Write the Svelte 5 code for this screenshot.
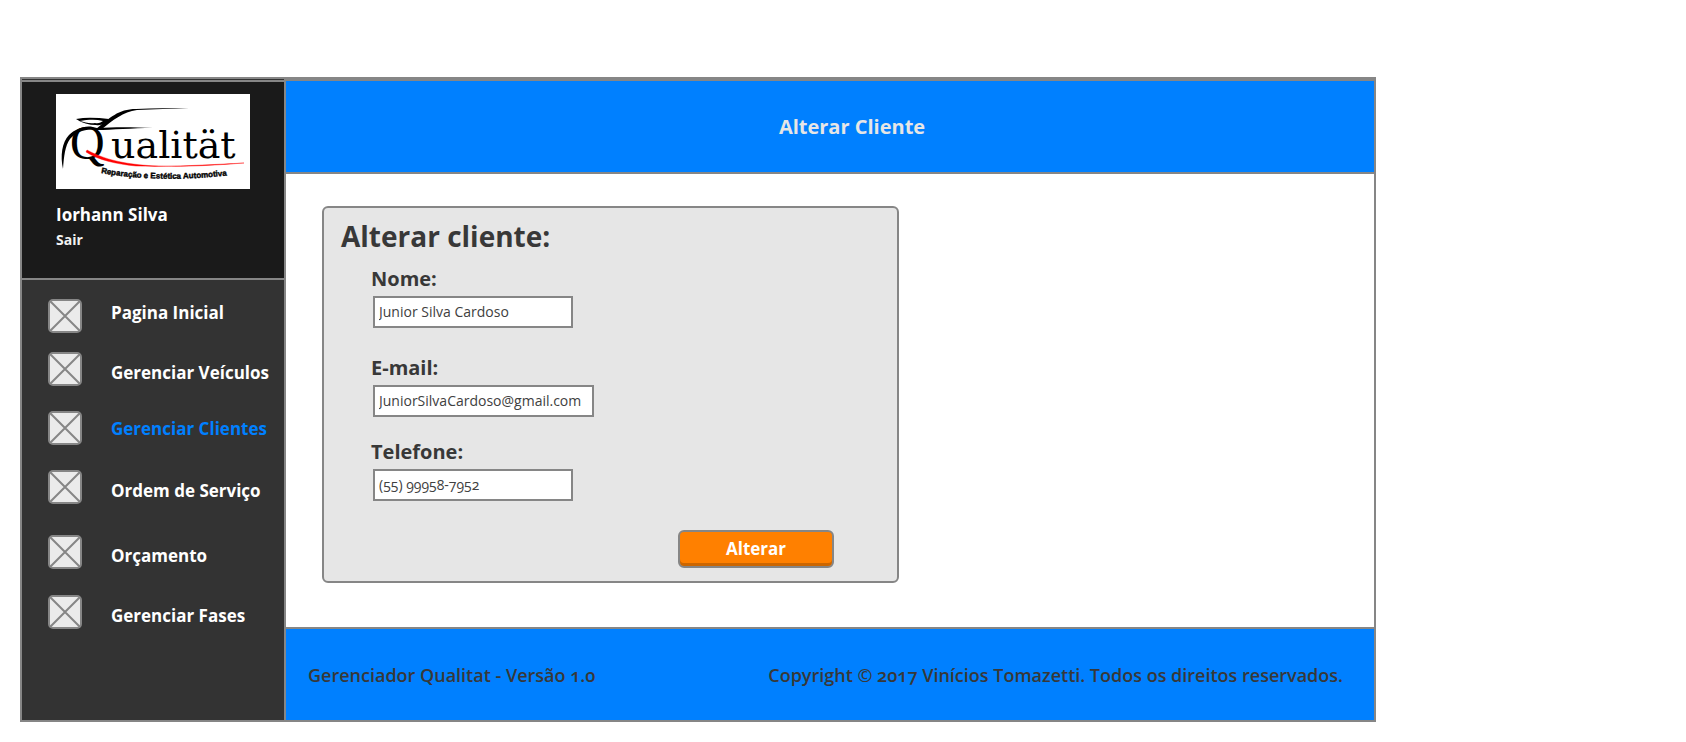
<script>
  const nav = [
    { label: 'Pagina Inicial', align: 'high' },
    { label: 'Gerenciar Veículos', align: 'low' },
    { label: 'Gerenciar Clientes', align: 'mid', active: true },
    { label: 'Ordem de Serviço', align: 'low' },
    { label: 'Orçamento', align: 'low' },
    { label: 'Gerenciar Fases', align: 'low' }
  ];

  let nome = $state('Junior Silva Cardoso');
  let email = $state('JuniorSilvaCardoso@gmail.com');
  let telefone = $state('(55) 99958-7952');
</script>

<div class="frame">
  <aside class="sidebar">
    <section class="profile">
      <svg class="logo" viewBox="0 0 194 95" role="img" aria-label="Qualität">
        <rect width="194" height="95" fill="#fff" />
        <path d="M7 75 C4 62 6 48 13 41 C20 34 31 30 41 34 C58 33 76 33 97 34 C76 34 56 36 41 36 C30 34 20 38 14 45 C9 52 8 62 7 75 Z" fill="#000" />
        <path d="M40 35 C54 24 62 15 80 15 C98 14 115 14 133 14 C115 15 98 15 81 16 C67 18 57 26 46 35 Z" fill="#000" />
        <path d="M20 25 C31 23 42 24 53 25 C49 29 46 32 40 31 C33 31 26 29 20 25 Z M24 27 C29 28 33 30 39 29 C43 30 45 28 47 27 C39 25 31 26 24 27 Z" fill="#000" fill-rule="evenodd" />
        <text class="q" x="14" y="65">Q</text>
        <text class="rest" x="55" y="64">ualität</text>
        <path d="M31 56 C60 72 100 76 188 69 C130 72 104 73 80 72 C60 70 42 66 30 58 Z" fill="#f00" stroke="#f00" stroke-width="0.4" />
        <path id="tagline" d="M45 79 Q105 90 184 80" fill="none" />
        <text class="tag"><textPath href="#tagline">Reparação e Estética Automotiva</textPath></text>
      </svg>
      <strong class="user">Iorhann Silva</strong>
      <a class="logout" href="#sair">Sair</a>
    </section>
    <nav>
      <ul>
        {#each nav as item}
          <li>
            <a class="item {item.align}" class:active={item.active} href="#menu">
              <svg class="box" viewBox="0 0 34 34" aria-hidden="true">
                <rect x="1" y="1" width="32" height="32" rx="4" />
                <path d="M2 2 32 32M32 2 2 32" />
              </svg>
              <span>{item.label}</span>
            </a>
          </li>
        {/each}
      </ul>
    </nav>
  </aside>

  <div class="page">
    <header><h1>Alterar Cliente</h1></header>
    <main>
      <form class="card" onsubmit={(e) => e.preventDefault()}>
        <h2>Alterar cliente:</h2>
        <div class="fields">
          <div class="field">
            <label for="nome">Nome:</label>
            <input id="nome" type="text" bind:value={nome} />
          </div>
          <div class="field">
            <label for="email">E-mail:</label>
            <input id="email" class="wide" type="email" bind:value={email} />
          </div>
          <div class="field">
            <label for="telefone">Telefone:</label>
            <input id="telefone" type="tel" bind:value={telefone} />
          </div>
        </div>
        <button type="submit">Alterar</button>
      </form>
    </main>
    <footer>
      <span>Gerenciador Qualitat - Versão 1.0</span>
      <span>Copyright © 2017 Vinícios Tomazetti. Todos os direitos reservados.</span>
    </footer>
  </div>
</div>

<style>
  :global(body) {
    background: #fff;
  }

  .frame, .frame * {
    box-sizing: border-box;
  }

  .frame {
    --line: #868686;
    --font: "Open Sans", "Noto Sans", sans-serif;
    display: flex;
    margin: 77px 310px 20px 20px;
    border: 2px solid var(--line);
    font-family: var(--font);
    font-variant-numeric: oldstyle-nums;
    font-weight: 700;
    color: #383838;
  }

  .sidebar {
    flex: 0 0 264px;
    padding-top: 1px;
    border-right: 2px solid var(--line);
    background: #333;
    color: #fff;
  }

  .profile {
    display: flex;
    flex-direction: column;
    align-items: flex-start;
    padding: 12px 34px 26px;
    border-top: 2px solid var(--line);
    border-bottom: 2px solid var(--line);
    background: #1a1a1a;
  }

  .logo {
    display: block;
    width: 194px;
    height: 95px;
    margin-bottom: 13px;
  }

  .q {
    font-family: "Liberation Serif", serif;
    font-size: 48px;
    font-weight: 400;
  }

  .rest {
    font-family: "DejaVu Serif", serif;
    font-size: 38px;
    font-weight: 400;
  }

  .tag {
    font-family: "Liberation Sans", sans-serif;
    font-size: 8px;
    font-weight: 700;
    stroke: #000;
    stroke-width: 0.4px;
  }

  .user {
    font-size: 17px;
    font-weight: 700;
    line-height: 25px;
  }

  .logout {
    color: #f2f2f2;
    font-size: 14px;
    line-height: 25px;
    text-decoration: none;
  }

  ul {
    display: grid;
    grid-template-rows: 53px 59px 59px 65px 60px 34px;
    margin: 0;
    padding: 19px 0 0 26px;
    list-style: none;
  }

  .item {
    display: flex;
    gap: 29px;
    height: 34px;
    color: #fff;
    font-size: 17px;
    line-height: 27px;
    text-decoration: none;
    white-space: nowrap;
  }

  .high {
    align-items: flex-start;
  }

  .mid {
    align-items: center;
  }

  .low {
    align-items: flex-end;
  }

  .active {
    color: #0080ff;
  }

  .box {
    flex: none;
    width: 34px;
    height: 34px;
    fill: #ebebeb;
    stroke: #868686;
    stroke-width: 2;
  }

  .page {
    display: flex;
    flex: 1;
    flex-direction: column;
    min-width: 0;
  }

  header, footer {
    display: flex;
    align-items: center;
    background: #0080ff;
    min-height: 93px;
    border-top: 2px solid var(--line);
  }

  header {
    justify-content: center;
    min-height: 95px;
    padding-left: 44px;
    border-bottom: 2px solid var(--line);
  }

  h1 {
    margin: 0;
    color: #e6e6e6;
    font-size: 20px;
    line-height: 28px;
  }

  main {
    flex: 1;
    padding: 32px 36px 44px;
  }

  .card {
    display: flex;
    flex-direction: column;
    max-width: 577px;
    padding: 8px 17px 13px;
    border: 2px solid var(--line);
    border-radius: 6px;
    background: #e6e6e6;
  }

  h2 {
    margin: 0;
    font-size: 28px;
    line-height: 40px;
  }

  .fields {
    display: grid;
    grid-template-rows: 89px 84px 66px;
    padding: 6px 0 0 30px;
  }

  .field {
    display: flex;
    flex-direction: column;
    align-items: flex-start;
  }

  label {
    font-size: 20px;
    line-height: 34px;
  }

  input {
    width: 200px;
    height: 32px;
    margin-left: 2px;
    padding: 0 4px 2px;
    border: 2px solid var(--line);
    border-radius: 0;
    background: #fff;
    color: #404040;
    font: 400 14px var(--font);
    font-variant-numeric: oldstyle-nums;
  }

  .wide {
    width: 221px;
  }

  button {
    align-self: flex-end;
    width: 156px;
    height: 38px;
    margin: 29px 46px 0 0;
    padding: 0 0 2px;
    border: 2px solid var(--line);
    border-radius: 6px;
    background: #ff8000;
    box-shadow: inset 0 -3px #cc6600;
    color: #fff;
    font: 700 17px var(--font);
  }

  footer {
    justify-content: space-between;
    gap: 24px;
    padding: 0 31px 0 22px;
    font-size: 18px;
    font-weight: 600;
    line-height: 24px;
  }
</style>
